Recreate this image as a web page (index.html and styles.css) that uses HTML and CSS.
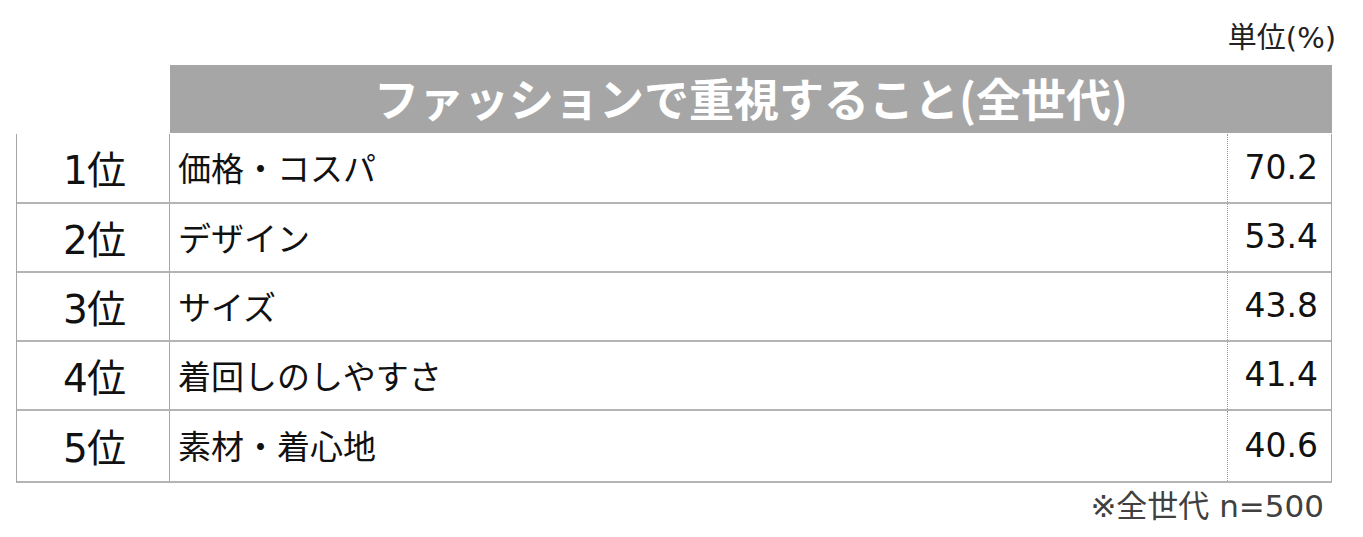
FILE: index.html
```html
<!DOCTYPE html>
<html lang="ja">
<head>
<meta charset="utf-8">
<link rel="stylesheet" href="styles.css">
</head>
<body>
<div class="page">
  <div class="unit">単位(%)</div>
  <div class="title">ファッションで重視すること(全世代)</div>
  <div class="table">
    <div class="row"><div class="rank">1位</div><div class="item">価格・コスパ</div><div class="val">70.2</div></div>
    <div class="row"><div class="rank">2位</div><div class="item">デザイン</div><div class="val">53.4</div></div>
    <div class="row"><div class="rank">3位</div><div class="item">サイズ</div><div class="val">43.8</div></div>
    <div class="row"><div class="rank">4位</div><div class="item">着回しのしやすさ</div><div class="val">41.4</div></div>
    <div class="row"><div class="rank">5位</div><div class="item">素材・着心地</div><div class="val">40.6</div></div>
  </div>
  <div class="note">※全世代 n=500</div>
</div>
</body>
</html>
```
FILE: styles.css
```css
html, body { margin: 0; padding: 0; background: #fff; }
body { font-family: "DejaVu Sans", "Noto Sans CJK JP", sans-serif; color: #111; }
.page { padding: 16px 31px 0 16px; }
.unit { text-align: right; font-size: 29px; line-height: 44px; height: 49px; margin-right: -4px; font-family: "DejaVu Sans", "Noto Sans CJK JP", sans-serif; color: #222; }
.title { margin-left: 154px; height: 68px; background: #a6a6a6; color: #fff; font-family: "Noto Sans CJK JP", sans-serif; font-weight: 700; font-size: 45px; display: flex; align-items: center; justify-content: center; line-height: 1; padding-bottom: 4px; box-sizing: border-box; }
.table { border-left: 1px solid #a6a6a6; border-right: 1px solid #a6a6a6; border-bottom: 2px solid #b4b4b4; margin-top: 1px; }
.row { display: grid; grid-template-columns: 153px 1fr 103px; height: 69px; border-bottom: 2px solid #b4b4b4; box-sizing: border-box; }
.row:first-child { height: 70px; }
.row:last-child { border-bottom: none; height: 70px; }
.rank { display: flex; align-items: center; justify-content: center; font-size: 39px; letter-spacing: -1px; border-right: 1px solid #a6a6a6; padding-left: 2px; padding-bottom: 2px; }
.item { display: flex; align-items: center; padding-left: 8px; font-family: "Noto Sans CJK JP", sans-serif; font-size: 33px; border-right: 1px dotted #999; padding-bottom: 2px; }
.val { display: flex; align-items: center; justify-content: flex-end; padding-right: 13px; font-size: 33px; padding-bottom: 2px; }
.note { text-align: right; font-size: 31px; color: #404040; margin-right: 8px; margin-top: -2px; }
```
